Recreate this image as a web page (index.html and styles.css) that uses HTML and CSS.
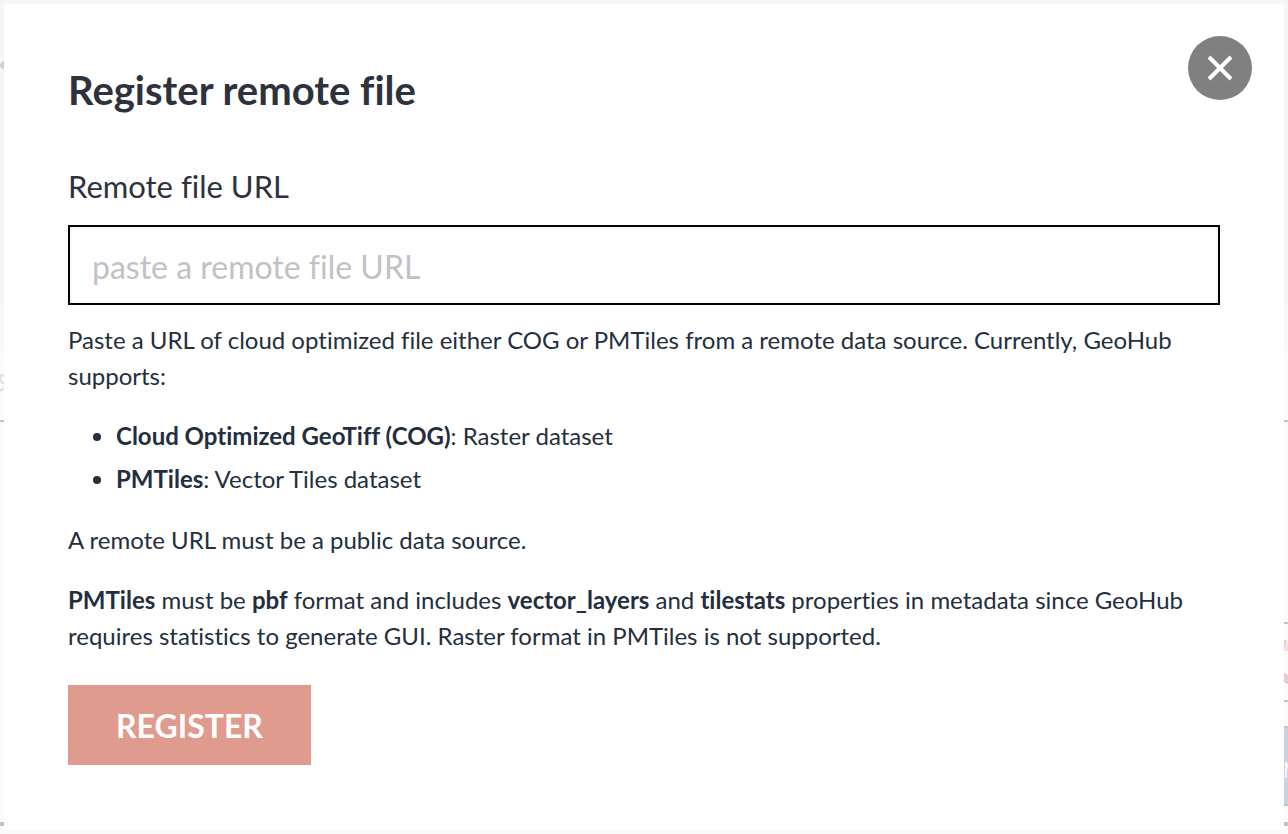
FILE: index.html
```
<!DOCTYPE html>
<html lang="en">
<head>
<meta charset="utf-8">
<meta name="viewport" content="width=device-width, initial-scale=1">
<title>Register remote file</title>
<link rel="stylesheet" href="styles.css">
</head>
<body>
<svg class="backdrop backdrop-left" width="4" height="834" viewBox="0 0 4 834" aria-hidden="true">
  <path d="M4 60v10L0 66.500v-2z" fill="#cfcfcf"/>
  <path d="M4 30q-1.500 3 0 7" fill="#ececec"/>
  <path d="M5 376Q0 374 0 378T4 383T4 388T0 389" fill="none" stroke="#dedede" stroke-width="2"/>
  <path d="M0 420h4v2H0zM0 822h4v4H0z" fill="#c4c4c4"/>
</svg>
<svg class="backdrop backdrop-right" width="4" height="834" viewBox="0 0 4 834" aria-hidden="true">
  <path d="M0 640h3l-2 10H0z" fill="#f2cdcd"/>
  <path d="M4 642v9H1z" fill="#eee0c8"/>
  <path d="M0 673l4 2v9l-4-2z" fill="#e2cbd1"/>
  <path d="M0 728h4v76H0z" fill="#cad3e1"/>
  <path d="M1 762h2l1 3v5l-1-2v10H1z" fill="#f4f6f9"/>
  <path d="M0 420h4v2H0zM0 622h4v2H0zM0 700h4v2H0zM0 726h4v2H0zM0 804h4v2H0zM0 822h4v4H0z" fill="#c4c4c4"/>
</svg>
<main class="modal" role="dialog" aria-labelledby="title">
  <button class="close" type="button" aria-label="Close">
    <svg width="26" height="26" viewBox="0 0 26 26" aria-hidden="true"><path d="M2 2L24 24M24 2L2 24" fill="none" stroke="#fff" stroke-width="4"/></svg>
  </button>
  <h1 class="title" id="title">Register remote file</h1>
  <form class="form">
    <label class="label" for="url">Remote file URL</label>
    <input class="input" id="url" type="url" placeholder="paste a remote file URL">
    <div class="help">
      <p>Paste a URL of cloud optimized file either COG or PMTiles from a remote data source. Currently, GeoHub supports:</p>
      <ul class="formats">
        <li><b>Cloud Optimized GeoTiff (COG)</b>: Raster dataset</li>
        <li><b>PMTiles</b>: Vector Tiles dataset</li>
      </ul>
      <p>A remote URL must be a public data source.</p>
      <p><b>PMTiles</b> must be <b>pbf</b> format and includes <b>vector_layers</b> and <b>tilestats</b> properties in metadata since GeoHub requires statistics to generate GUI. Raster format in PMTiles is not supported.</p>
    </div>
    <button class="register" type="button">REGISTER</button>
  </form>
</main>
</body>
</html>
```
FILE: styles.css
```
* { box-sizing: border-box; }
body {
  margin: 0;
  padding: 4px;
  min-height: 100vh;
  display: flex;
  position: relative;
  background: linear-gradient(#f6f6f6 0, #f6f6f6 300px, #fafafa 360px);
  color: #232f3e;
  font-family: Lato, "Open Sans", sans-serif;
  font-variant-ligatures: none;
}
.backdrop { position: absolute; top: 0; }
.backdrop-left { left: 0; }
.backdrop-right { right: 0; }
.modal {
  position: relative;
  flex: 1;
  padding: 62px 64px 64px;
  background: #fff;
}
.close {
  position: absolute;
  top: 32px;
  right: 32px;
  width: 64px;
  height: 64px;
  padding: 0;
  display: grid;
  place-items: center;
  border: 0;
  border-radius: 50%;
  background: #808080;
}
.title {
  margin: 0 0 48px;
  color: #2e323c;
  font-size: 40px;
  line-height: 48px;
  font-weight: 700;
}
.label {
  display: block;
  margin-bottom: 15px;
  color: #2e323c;
  font-size: 31px;
  line-height: 48px;
}
.input {
  display: block;
  width: 100%;
  height: 80px;
  padding: 2px 22px 0;
  border: 2px solid #000;
  border-radius: 0;
  background: #fff;
  box-shadow: inset 0 2px 4px #0000000d;
  color: #2e323c;
  font: inherit;
  font-size: 32px;
  font-variant-ligatures: none;
}
.input::placeholder { color: #c2c2c6; opacity: 1; }
.help {
  margin: 17px 0 31px;
  font-size: 24px;
  line-height: 36px;
}
.help p { margin: 0 0 24px; }
.help p:last-child { margin-bottom: 0; }
.formats {
  margin: 0 0 25px;
  padding-left: 48px;
  display: grid;
  gap: 7px;
}
.register {
  display: block;
  height: 80px;
  padding: 0 48px;
  border: 0;
  background: #df9b8d;
  color: #fff;
  font: inherit;
  font-size: 32px;
  font-weight: 700;
}
```
